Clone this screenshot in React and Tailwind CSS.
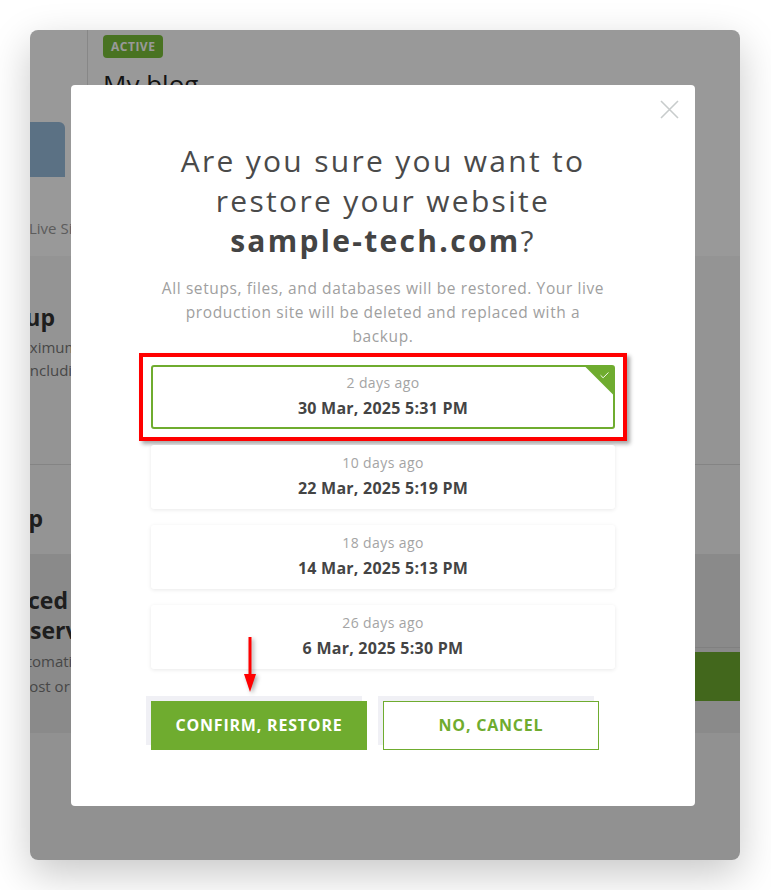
import React from 'react';
import { Check } from 'lucide-react';

const backups = [
    { ago: '2 days ago', date: '30 Mar, 2025 5:31 PM', selected: true },
    { ago: '10 days ago', date: '22 Mar, 2025 5:19 PM' },
    { ago: '18 days ago', date: '14 Mar, 2025 5:13 PM' },
    { ago: '26 days ago', date: '6 Mar, 2025 5:30 PM' },
];

// text that ends at a given x and is clipped by the window's left edge
const Clipped = ({ w, className, children }) => (
    <div className={`flex justify-end ${w}`}>
        <span className={`whitespace-nowrap ${className}`}>{children}</span>
    </div>
);

const BackgroundPage = () => (
    <div className="flex h-full flex-col">
        <div className="flex h-[92px] shrink-0">
            <div className="w-[58px] shrink-0 border-r border-[#e2e2e2]" />
            <div className="pl-[15px] pt-[3px]">
                <span className="inline-block rounded bg-[#7bc039] px-2 py-[6px] text-[12px] font-bold leading-[11px] tracking-[0.5px] text-white">ACTIVE</span>
                <div className="mt-[10px] text-[26px] leading-[32px] text-[#222]">My blog</div>
            </div>
        </div>
        <div className="h-[55px] shrink-0">
            <div className="h-full w-[35px] rounded-tr-md bg-[#98bcdc]" />
        </div>
        <div className="h-[79px] shrink-0 bg-white pt-[41px]">
            <div className="-ml-[1px] whitespace-nowrap text-[15px] leading-5 text-[#9a9a9a]">Live Sites</div>
        </div>
        <div className="h-[209px] shrink-0 border-b border-[#dcdcdc] bg-[#f7f7f7] pt-[46px]">
            <Clipped w="w-[25px]" className="text-[23px] font-bold leading-[30px] text-[#333]">Daily Backup</Clipped>
            <div className="mt-[4px] -ml-[22px] whitespace-nowrap text-[15px] leading-[23px] text-[#777]">Maximum of 30 backups kept</div>
            <div className="-ml-[4px] whitespace-nowrap text-[15px] leading-[23px] text-[#777]">including database</div>
        </div>
        <div className="h-[89px] shrink-0 bg-[#f7f7f7] pt-[38px]">
            <Clipped w="w-[13px]" className="text-[23px] font-bold leading-[30px] text-[#333]">Manual Backup</Clipped>
        </div>
        <div className="flex h-[179px] shrink-0 justify-between bg-[#e6e6e6]">
            <div className="pt-[31px]">
                <Clipped w="w-[38px]" className="text-[23px] font-bold leading-[30px] text-[#333]">Advanced</Clipped>
                <div className="whitespace-nowrap text-[23px] font-bold leading-[30px] text-[#333]">server settings</div>
                <div className="mt-[4px] -ml-[22px] whitespace-nowrap text-[15px] leading-[25px] text-[#777]">Automatic backups</div>
                <div className="-ml-[10px] whitespace-nowrap text-[15px] leading-[25px] text-[#777]">host or server</div>
            </div>
            <div className="flex flex-col pt-[93px]">
                <div className="h-[5px] w-[200px] border-t border-[#d6d6d6]" />
                <div className="h-[49px] w-[200px] bg-[#6fac2f]" />
            </div>
        </div>
        <div className="flex-1 bg-[#f2f2f2]" />
    </div>
);

const BackupCard = ({ ago, date, selected }) => (
    <div
        className={`relative flex h-[64px] flex-col items-center justify-center rounded-[3px] bg-white ${
            selected ? 'border-2 border-[#6fac2f]' : 'shadow-[0_1px_4px_rgba(0,0,0,0.09)]'
        }`}
    >
        {selected && (
            <>
                <div className="absolute right-0 top-0 h-[28px] w-[28px] bg-[#6fac2f] [clip-path:polygon(0_0,100%_0,100%_100%)]" />
                <Check className="absolute right-[3px] top-[3px] text-white" size={11} strokeWidth={2} />
                <div className="pointer-events-none absolute -inset-[14px] border-4 border-[#ff0000] shadow-[3px_3px_4px_rgba(0,0,0,0.35)]" />
            </>
        )}
        <div className="text-[14px] leading-5 tracking-[0.4px] text-[#a4a4a4]">{ago}</div>
        <div className="mt-[3px] text-[16px] font-bold leading-6 tracking-[0.25px] text-[#444]">{date}</div>
    </div>
);

const RestoreModal = () => (
    <div className="relative w-[624px] rounded bg-white px-[80px] pb-[56px] pt-[56px] text-center">
        <button className="absolute right-[16px] top-[15px]">
            <svg width="19" height="19" viewBox="0 0 19 19">
                <path d="M1 1 L18 18 M18 1 L1 18" stroke="#c8cccc" strokeWidth="1.6" />
            </svg>
        </button>

        <h2 className="text-[30px] leading-[40px] tracking-[2.3px] text-[#4a4a4a]">
            Are you sure you want to<br />
            restore your website<br />
            <span className="font-bold text-[#444]">sample-tech.com</span>?
        </h2>
        <p className="mt-[15px] whitespace-nowrap text-[15.5px] leading-6 tracking-[0.6px] text-[#a0a0a0]">
            All setups, files, and databases will be restored. Your live<br />
            production site will be deleted and replaced with a<br />
            backup.
        </p>

        <div className="mt-[17px] flex flex-col gap-4">
            {backups.map((b) => (
                <BackupCard key={b.date} {...b} />
            ))}
        </div>

        <div className="mt-[32px] flex gap-4">
            <button className="h-[49px] w-[216px] bg-[#6fac2f] text-[16px] font-bold tracking-[0.8px] text-white shadow-[-5px_-5px_0_0_#f0f0f5]">
                CONFIRM, RESTORE
            </button>
            <button className="h-[49px] w-[216px] border border-[#6fac2f] bg-white text-[16px] font-bold tracking-[0.8px] text-[#6fac2f] shadow-[-5px_-5px_0_0_#f0f0f5]">
                NO, CANCEL
            </button>
        </div>

        {/* annotation arrow */}
        <svg className="absolute left-[171px] top-[552px] drop-shadow-[2px_2px_2px_rgba(0,0,0,0.35)]" width="16" height="56" viewBox="0 0 16 56">
            <path d="M8 0 V40" stroke="#ff0000" strokeWidth="3" />
            <polygon points="2,37 14,37 8,55" fill="#ff0000" />
        </svg>
    </div>
);

export default function App() {
    return (
        <div className="min-h-screen bg-white p-[30px] font-['Open_Sans',sans-serif]">
            <div className="relative h-[830px] w-[710px] overflow-hidden rounded-lg shadow-[0_14px_40px_rgba(0,0,0,0.22)]">
                <BackgroundPage />
                <div className="absolute inset-0 bg-black/40" />
                <div className="absolute inset-0 flex items-center justify-center pr-[4px]">
                    <RestoreModal />
                </div>
            </div>
        </div>
    );
}
